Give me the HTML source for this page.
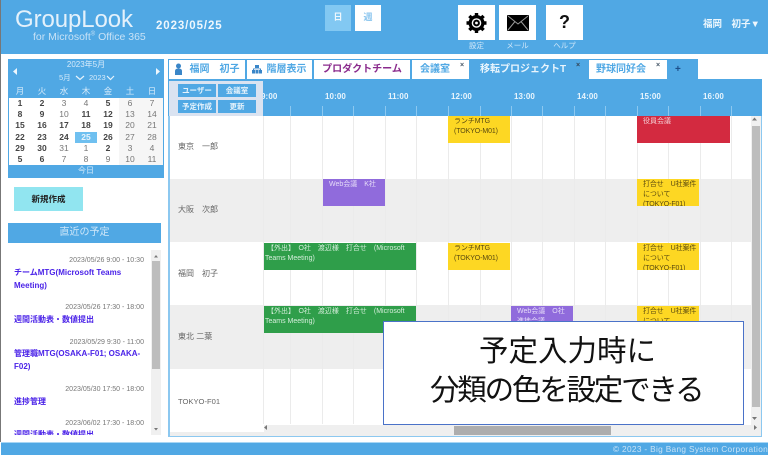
<!DOCTYPE html>
<html lang="ja"><head><meta charset="utf-8"><style>
html,body{margin:0;padding:0;background:#fff;width:768px;height:461px;overflow:hidden}
#p{position:relative;width:768px;height:461px;overflow:hidden;background:#fff;font-family:"Liberation Sans","Noto Sans CJK JP",sans-serif;filter:blur(.35px)}
.a{position:absolute;white-space:nowrap}
.b{position:absolute}
.c{position:absolute;width:22px;text-align:center;font-size:8.5px;line-height:11px;color:#777}
.c.d{font-weight:bold;color:#444}
.w{position:absolute;width:22px;text-align:center;font-size:8.5px;line-height:12px;color:#d5eafa;top:85px}
.tab{position:absolute;top:59px;height:20px;background:#fff;box-sizing:border-box;border:1px solid #50a8e4;border-bottom:0;font-size:10px;font-weight:bold;line-height:19px;color:#50a8e4;white-space:nowrap;text-align:center}
.btn{position:absolute;width:38px;height:13px;background:#50a8e4;color:#e6f3fc;font-size:7.5px;font-weight:bold;line-height:13px;text-align:center}
.tm{position:absolute;font-size:8px;font-weight:bold;color:#e9f5fd;line-height:12px;letter-spacing:.1px}
.ev{position:absolute;height:27px;overflow:hidden;font-size:7px;line-height:10px;box-sizing:border-box;padding:1px 0 0 6px;white-space:nowrap}
.y{background:#fdd723;color:#5a4a10;width:62px;letter-spacing:-.1px}
.p{background:#906bdc;color:#e6dcf8;width:62px}
.g{background:#2f9e4a;color:#d5eedb;width:152px;padding-left:1px}
.nm{position:absolute;left:178px;font-size:8px;line-height:12px;color:#666;white-space:nowrap}
.dt{position:absolute;font-size:7.05px;line-height:11px;color:#777;white-space:nowrap}
.tt{position:absolute;left:14px;font-size:8px;font-weight:bold;line-height:13px;color:#4a22e8;white-space:nowrap}
.lb{position:absolute;top:41px;font-size:7.5px;line-height:10px;color:#cfe7f9;text-align:center}
</style></head><body><div id="p">

<!-- header -->
<div class="b" style="left:1px;top:0;width:767px;height:54px;background:#50a8e4"></div>
<div class="b" style="left:0;top:0;width:1px;height:442px;background:#777"></div>
<div class="a" style="left:15px;top:3px;font-size:24px;line-height:33px;color:#e4f1fb;letter-spacing:-.1px">GroupLook</div>
<div class="a" style="left:33px;top:30px;font-size:10.5px;line-height:14px;color:#c8e2f6">for Microsoft<sup style="font-size:6px;line-height:0">®</sup> Office 365</div>
<div class="a" style="left:156px;top:19px;font-size:11.5px;font-weight:bold;line-height:14px;color:#eef7fd;letter-spacing:.9px">2023/05/25</div>
<div class="b" style="left:325px;top:5px;width:26px;height:26px;background:#82c8f2;color:#eef7fd;font-size:9px;font-weight:bold;line-height:25px;text-align:center">日</div>
<div class="b" style="left:355px;top:5px;width:26px;height:26px;background:#fff;color:#8cc6ee;font-size:9px;font-weight:bold;line-height:25px;text-align:center">週</div>

<div class="b" style="left:458px;top:5px;width:37px;height:35px;background:#fff"></div>
<div class="b" style="left:499px;top:5px;width:37px;height:35px;background:#fff"></div>
<div class="b" style="left:546px;top:5px;width:37px;height:35px;background:#fff"></div>
<svg class="b" style="left:466px;top:13px" width="21" height="20" viewBox="0 0 21 20">
<g stroke="#000" stroke-width="3.4"><path d="M10.5 0v20M.5 10h20M3.4 2.9l14.2 14.2M17.6 2.9 3.4 17.1"/></g>
<circle cx="10.5" cy="10" r="8" fill="#000"/><circle cx="10.5" cy="10" r="4.8" fill="#fff"/><circle cx="10.5" cy="10" r="3.4" fill="#000"/><circle cx="10.5" cy="10" r="1.4" fill="#fff"/></svg>
<svg class="b" style="left:507px;top:15px" width="22" height="16" viewBox="0 0 22 16">
<rect width="22" height="16" rx="1" fill="#000"/><path d="M1 1l10 8 10-8M1 15l7-8.5M21 15l-7-8.5" fill="none" stroke="#999" stroke-width="1"/></svg>
<div class="a" style="left:546px;top:11px;width:37px;text-align:center;font-size:18px;font-weight:bold;line-height:22px;color:#111">?</div>
<div class="lb" style="left:458px;width:37px">設定</div>
<div class="lb" style="left:499px;width:37px">メール</div>
<div class="lb" style="left:546px;width:37px">ヘルプ</div>
<div class="a" style="left:703px;top:18px;font-size:9.5px;font-weight:bold;line-height:14px;color:#eef7fd">福岡　初子▼</div>

<!-- calendar -->
<div class="b" style="left:8px;top:59px;width:156px;height:119px;background:#50a8e4"></div>
<div class="b" style="left:9px;top:98px;width:154px;height:67px;background:#fff"></div>
<div class="b" style="left:119px;top:98px;width:44px;height:67px;background:#f6f6f6"></div>
<div class="a" style="left:8px;width:156px;top:59px;text-align:center;font-size:8px;line-height:12px;color:#d5eafa">2023年5月</div>
<div class="a" style="left:59px;top:72px;font-size:7.5px;line-height:12px;color:#d5eafa">5月</div>
<div class="a" style="left:89px;top:72px;font-size:7.5px;line-height:12px;color:#d5eafa">2023</div>
<svg class="b" style="left:75px;top:75px" width="40" height="6"><path d="M1 1l4 3.500L9 1M32 1l3.500 3.500L39 1" fill="none" stroke="#e6f3fc" stroke-width="1.200"/></svg>
<svg class="b" style="left:12px;top:67px" width="150" height="9"><path d="M5 1v7L1 4.500zM144 1v7l4-3.500z" fill="#eef7fd"/></svg>
<div class="b" style="left:75px;top:132px;width:22px;height:11px;background:#6fc0f0"></div>
<div class="w" style="left:9px">月</div><div class="w" style="left:31px">火</div><div class="w" style="left:53px">水</div><div class="w" style="left:75px">木</div><div class="w" style="left:97px">金</div><div class="w" style="left:119px">土</div><div class="w" style="left:141px">日</div>

<div class="c d" style="left:9px;top:98px">1</div><div class="c d" style="left:31px;top:98px">2</div><div class="c" style="left:53px;top:98px">3</div><div class="c" style="left:75px;top:98px">4</div><div class="c d" style="left:97px;top:98px">5</div><div class="c" style="left:119px;top:98px">6</div><div class="c" style="left:141px;top:98px">7</div>
<div class="c d" style="left:9px;top:109px">8</div><div class="c d" style="left:31px;top:109px">9</div><div class="c" style="left:53px;top:109px">10</div><div class="c d" style="left:75px;top:109px">11</div><div class="c d" style="left:97px;top:109px">12</div><div class="c" style="left:119px;top:109px">13</div><div class="c" style="left:141px;top:109px">14</div>
<div class="c d" style="left:9px;top:120px">15</div><div class="c d" style="left:31px;top:120px">16</div><div class="c d" style="left:53px;top:120px">17</div><div class="c d" style="left:75px;top:120px">18</div><div class="c d" style="left:97px;top:120px">19</div><div class="c" style="left:119px;top:120px">20</div><div class="c" style="left:141px;top:120px">21</div>
<div class="c d" style="left:9px;top:132px">22</div><div class="c d" style="left:31px;top:132px">23</div><div class="c d" style="left:53px;top:132px">24</div><div class="c d" style="left:75px;top:132px;color:#e6f3fc">25</div><div class="c d" style="left:97px;top:132px">26</div><div class="c" style="left:119px;top:132px">27</div><div class="c" style="left:141px;top:132px">28</div>
<div class="c d" style="left:9px;top:143px">29</div><div class="c d" style="left:31px;top:143px">30</div><div class="c" style="left:53px;top:143px">31</div><div class="c" style="left:75px;top:143px">1</div><div class="c d" style="left:97px;top:143px">2</div><div class="c" style="left:119px;top:143px">3</div><div class="c" style="left:141px;top:143px">4</div>
<div class="c d" style="left:9px;top:154px">5</div><div class="c d" style="left:31px;top:154px">6</div><div class="c" style="left:53px;top:154px">7</div><div class="c" style="left:75px;top:154px">8</div><div class="c" style="left:97px;top:154px">9</div><div class="c" style="left:119px;top:154px">10</div><div class="c" style="left:141px;top:154px">11</div>
<div class="a" style="left:8px;width:156px;top:165px;text-align:center;font-size:8px;line-height:12px;color:#d5eafa">今日</div>

<!-- new -->
<div class="b" style="left:14px;top:187px;width:69px;height:24px;background:#91e5f0;color:#222;font-size:8.5px;font-weight:bold;line-height:24px;text-align:center">新規作成</div>

<!-- recent -->
<div class="b" style="left:8px;top:223px;width:153px;height:20px;background:#50a8e4;color:#cfe7f9;font-size:10px;line-height:20px;text-align:center">直近の予定</div>
<div class="b" style="left:0;top:250px;width:151px;height:185px;overflow:hidden">
<div class="dt" style="right:7px;top:5px">2023/05/26 9:00 - 10:30</div>
<div class="tt" style="top:16px">チームMTG(Microsoft Teams</div><div class="tt" style="top:29px">Meeting)</div>
<div class="dt" style="right:7px;top:52px">2023/05/26 17:30 - 18:00</div>
<div class="tt" style="top:63px">週間活動表・数値提出</div>
<div class="dt" style="right:7px;top:87px">2023/05/29 9:30 - 11:00</div>
<div class="tt" style="top:97px">管理職MTG(OSAKA-F01; OSAKA-</div><div class="tt" style="top:110px">F02)</div>
<div class="dt" style="right:7px;top:134px">2023/05/30 17:50 - 18:00</div>
<div class="tt" style="top:145px">進捗管理</div>
<div class="dt" style="right:7px;top:168px">2023/06/02 17:30 - 18:00</div>
<div class="tt" style="top:178px">週間活動表・数値提出</div>
</div>
<div class="b" style="left:151px;top:250px;width:10px;height:185px;background:#f0f0f0"></div>
<div class="b" style="left:152px;top:261px;width:8px;height:108px;background:#bdbdbd"></div>
<svg class="b" style="left:151px;top:250px" width="10" height="185"><path d="M3 7.500h4L5 5zM3 178h4l-2 2.500z" fill="#777"/></svg>

<!-- panel -->
<div class="b" style="left:168px;top:79px;width:594px;height:358px;background:#fff;box-sizing:border-box;border:1px solid #8cc8f0;border-width:0 2px 2px 2px"></div>
<div class="b" style="left:168px;top:79px;width:594px;height:37px;background:#50a8e4"></div>
<div class="b" style="left:170px;top:179px;width:581px;height:63px;background:#eee"></div>
<div class="b" style="left:170px;top:305px;width:581px;height:64px;background:#eee"></div>
<div class="b" style="left:170px;top:432px;width:94px;height:4px;background:#eee"></div>
<svg class="b" style="left:263px;top:106px" width="488" height="320" fill="none">
<path d="M0.500 10V318M27.500 10V318M59.500 10V318M90.500 10V318M122.500 10V318M153.500 10V318M185.500 10V318M217.500 10V318M248.500 10V318M279.500 10V318M311.500 10V318M342.500 10V318M374.500 10V318M405.500 10V318M437.500 10V318M468.500 10V318" stroke="#ebebeb"/>
<path d="M27.500 0V10M59.500 0V10M90.500 0V10M122.500 0V10M153.500 0V10M185.500 0V10M217.500 0V10M248.500 0V10M279.500 0V10M311.500 0V10M342.500 0V10M374.500 0V10M405.500 0V10M437.500 0V10M468.500 0V10" stroke="#8cc8f0"/>
</svg>
<div class="b" style="left:263px;top:81px;width:488px;height:24px;overflow:hidden">
<div class="tm" style="left:-2px;top:10px">9:00</div><div class="tm" style="left:62px;top:10px">10:00</div><div class="tm" style="left:125px;top:10px">11:00</div><div class="tm" style="left:188px;top:10px">12:00</div><div class="tm" style="left:251px;top:10px">13:00</div><div class="tm" style="left:314px;top:10px">14:00</div><div class="tm" style="left:377px;top:10px">15:00</div><div class="tm" style="left:440px;top:10px">16:00</div>
</div>
<div class="b" style="left:169px;top:81px;width:94px;height:35px;background:#dae3f1"></div>
<div class="btn" style="left:178px;top:84px">ユーザー</div><div class="btn" style="left:218px;top:84px">会議室</div>
<div class="btn" style="left:178px;top:100px">予定作成</div><div class="btn" style="left:218px;top:100px">更新</div>

<div class="nm" style="top:141px">東京　一郎</div>
<div class="nm" style="top:204px">大阪　次郎</div>
<div class="nm" style="top:268px">福岡　初子</div>
<div class="nm" style="top:331px">東北 二葉</div>
<div class="nm" style="top:396px;font-size:7.6px">TOKYO-F01</div>

<!-- events -->
<div class="ev y" style="left:448px;top:116px">ランチMTG<br>(TOKYO-M01)</div>
<div class="ev" style="left:637px;top:116px;width:93px;background:#d32a40;color:#f4d0d6">役員会議</div>
<div class="ev p" style="left:323px;top:179px">Web会議　K社</div>
<div class="ev y" style="left:637px;top:179px">打合せ　U社案件<br>について<br>(TOKYO-F01)</div>
<div class="ev g" style="left:264px;top:243px">&nbsp;【外出】　O社　渡辺様　打合せ　(Microsoft<br>Teams Meeting)</div>
<div class="ev y" style="left:448px;top:243px">ランチMTG<br>(TOKYO-M01)</div>
<div class="ev y" style="left:637px;top:243px">打合せ　U社案件<br>について<br>(TOKYO-F01)</div>
<div class="ev g" style="left:264px;top:306px">&nbsp;【外出】　O社　渡辺様　打合せ　(Microsoft<br>Teams Meeting)</div>
<div class="ev p" style="left:511px;top:306px">Web会議　O社<br>進捗会議</div>
<div class="ev y" style="left:637px;top:306px">打合せ　U社案件<br>について</div>

<!-- scrollbars -->
<div class="b" style="left:751px;top:116px;width:10px;height:309px;background:#f0f0f0"></div>
<div class="b" style="left:752px;top:126px;width:8px;height:281px;background:#bdbdbd"></div>
<div class="b" style="left:264px;top:425px;width:497px;height:11px;background:#efefef"></div>
<div class="b" style="left:454px;top:426px;width:157px;height:9px;background:#adadad"></div>
<svg class="b" style="left:264px;top:116px" width="497" height="320"><path d="M488 4.500h5l-2.500-3zM488 301h5l-2.500 3zM3 314v-5l-3 2.500zM490 309v5l3-2.500z" fill="#777"/></svg>

<!-- tabs -->
<div class="tab" style="left:168px;width:78px;padding-left:15px">福岡　初子</div>
<svg class="b" style="left:174px;top:63px" width="9" height="13"><circle cx="4.500" cy="3" r="2.500" fill="#3a86c8"/><path d="M1 12V8q0-2.500 3.500-2.500T8 8v4z" fill="#3a86c8"/></svg>
<div class="tab" style="left:246px;width:67px;padding-left:14px">階層表示</div>
<svg class="b" style="left:252px;top:65px" width="10" height="9" fill="#3a86c8"><rect x="3" y="0" width="4" height="3"/><rect x="0" y="5" width="3" height="3.500"/><rect x="3.500" y="5" width="3" height="3.500"/><rect x="7" y="5" width="3" height="3.500"/><path d="M1 5V3.500H9V5H8V4.300H2V5z"/></svg>
<div class="tab" style="left:313px;width:98px;color:#8a2a8c">プロダクトチーム</div>
<div class="tab" style="left:411px;width:59px;text-align:left;padding-left:8px">会議室</div>
<div class="a" style="left:460px;top:60px;font-size:7px;line-height:12px;color:#456;font-weight:bold">×</div>
<div class="tab" style="left:470px;width:118px;background:#50a8e4;color:#e9f5fd;text-align:left;padding-left:9px">移転プロジェクトT</div>
<div class="a" style="left:576px;top:60px;font-size:7px;line-height:12px;color:#345;font-weight:bold">×</div>
<div class="tab" style="left:588px;width:80px;text-align:left;padding-left:7px">野球同好会</div>
<div class="a" style="left:656px;top:60px;font-size:7px;line-height:12px;color:#456;font-weight:bold">×</div>
<div class="tab" style="left:667px;width:31px;background:#50a8e4;color:#1c4f8a;text-align:left;padding-left:7px;font-size:10px">+</div>

<!-- overlay -->
<div class="b" style="left:383px;top:321px;width:361px;height:104px;box-sizing:border-box;background:#fff;border:1px solid #4a72c8"></div>
<div class="a" style="left:479px;top:328px;font-size:29.500px;line-height:42px;color:#111;font-family:'Noto Sans CJK JP',sans-serif">予定入力時に</div>
<div class="a" style="left:430px;top:367px;font-size:29.500px;line-height:42px;color:#111;letter-spacing:-2.200px;font-family:'Noto Sans CJK JP',sans-serif">分類の色を設定できる</div>

<!-- footer -->
<div class="b" style="left:1px;top:442px;width:767px;height:13px;background:#50a8e4;border-top:1px solid #a8d6f4;box-sizing:border-box"></div>
<div class="a" style="left:613px;top:443px;font-size:8.300px;line-height:12px;color:#c8e2f6;letter-spacing:.32px">© 2023 - Big Bang System Corporation</div>
</div></body></html>
